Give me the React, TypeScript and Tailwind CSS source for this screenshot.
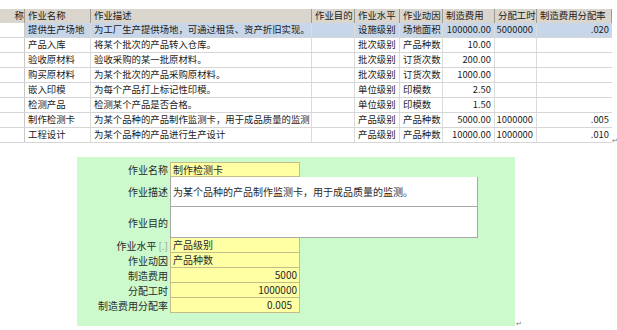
import React from "react";

const cols = [25, 66, 221, 43, 45, 43, 52, 42, 76];

const header = ["称", "作业名称", "作业描述", "作业目的", "作业水平", "作业动因", "制造费用", "分配工时", "制造费用分配率"];

const rows: string[][] = [
  ["提供生产场地", "为工厂生产提供场地，可通过租赁、资产折旧实现。", "", "设施级别", "场地面积", "100000.00", "5000000", ".020"],
  ["产品入库", "将某个批次的产品转入仓库。", "", "批次级别", "产品种数", "10.00", "", ""],
  ["验收原材料", "验收采购的某一批原材料。", "", "批次级别", "订货次数", "200.00", "", ""],
  ["购买原材料", "为某个批次的产品采购原材料。", "", "批次级别", "订货次数", "1000.00", "", ""],
  ["嵌入印模", "为每个产品打上标记性印模。", "", "单位级别", "印模数", "2.50", "", ""],
  ["检测产品", "检测某个产品是否合格。", "", "单位级别", "印模数", "1.50", "", ""],
  ["制作检测卡", "为某个品种的产品制作监测卡，用于成品质量的监测", "", "产品级别", "产品种数", "5000.00", "1000000", ".005"],
  ["工程设计", "为某个品种的产品进行生产设计", "", "产品级别", "产品种数", "10000.00", "1000000", ".010"],
];

// columns holding numbers are right aligned
const rightCols = [5, 6, 7];

const font = { fontFamily: '"Noto Sans CJK SC", "Noto Sans", sans-serif' };

// word paragraph mark
const Mark = ({ className }: { className?: string }) => (
  <span
    className={`text-[7px] leading-none text-[#777] ${className ?? ""}`}
    style={{ fontFamily: '"DejaVu Sans", sans-serif' }}
  >
    ↵
  </span>
);

const Grid = () => (
  <div className="flex items-end">
    <div className="w-[612px] text-[9.4px] leading-none text-[#1a1a1a]">
      {/* Header */}
      <div className="flex h-[14px] bg-[#dad6cd]">
        {header.map((h, i) => (
          <div
            key={i}
            style={{ width: i === 8 ? 75 : cols[i] }}
            className={`flex items-center overflow-hidden whitespace-nowrap border-r border-[#9d9a93] ${
              i === 0 ? "justify-end" : "pl-[3px]"
            }`}
          >
            {h}
          </div>
        ))}
      </div>

      {/* Body */}
      {rows.map((r, ri) => (
        <div key={ri} className="flex h-[15px] border-b border-[#d6d6d6]">
          <div style={{ width: cols[0] }} className="border-r border-[#c8c8c8]" />
          {r.map((c, ci) => (
            <div
              key={ci}
              style={{ width: ci === 7 ? 75 : cols[ci + 1] }}
              className={`flex items-center overflow-hidden whitespace-nowrap ${
                ci < r.length - 1 ? "border-r border-[#dcdcdc]" : ""
              } ${ri === 0 ? "bg-[#c8d6ea]" : "bg-white"} ${
                rightCols.includes(ci) ? "justify-end pr-[3px]" : ci === 7 ? "justify-end pr-px" : "pl-[3px]"
              }`}
            >
              {c}
            </div>
          ))}
        </div>
      ))}
    </div>
    <Mark className="-mb-[2px]" />
  </div>
);

const Yellow = ({ value, right, first, pr }: { value: string; right?: boolean; first?: boolean; pr?: string }) => (
  <div
    className={`flex h-[15px] w-[130px] items-center border-x border-b border-[#c4bd8a] bg-[#ffffa3] px-[2px] ${
      first ? "border-t" : ""
    } ${right ? "justify-end" : ""} ${pr ?? ""}`}
  >
    {value}
  </div>
);

const Label = ({ children }: { children: React.ReactNode }) => (
  <div className="flex w-[93px] shrink-0 items-center justify-end pr-[2px]">{children}</div>
);

const DetailForm = () => (
  <div className="ml-[77px] mt-[14px] flex items-end">
    <div className="h-[169px] w-[438px] bg-[#ccfacc] pt-[5px] text-[10px] leading-none text-[#2a2a2a]">
      <div className="flex">
        <Label>作业名称</Label>
        <Yellow value="制作检测卡" first />
      </div>
      <div className="flex h-[30px]">
        <Label>作业描述</Label>
        <div className="flex h-[30px] w-[308px] items-center border-x border-b border-[#a9a9a9] bg-white px-[2px]">
          为某个品种的产品制作监测卡，用于成品质量的监测。
        </div>
      </div>
      <div className="flex h-[31px]">
        <Label>作业目的</Label>
        <div className="h-[31px] w-[308px] border-x border-b border-[#a9a9a9] bg-white" />
      </div>
      <div className="flex">
        <Label>
          作业水平<span className="ml-[2px] text-[#9a9a9a]">[.]</span>
        </Label>
        <Yellow value="产品级别" />
      </div>
      <div className="flex">
        <Label>作业动因</Label>
        <Yellow value="产品种数" />
      </div>
      <div className="flex">
        <Label>制造费用</Label>
        <Yellow value="5000" right />
      </div>
      <div className="flex">
        <Label>分配工时</Label>
        <Yellow value="1000000" right />
      </div>
      <div className="flex">
        <Label>制造费用分配率</Label>
        <Yellow value="0.005" right pr="pr-[7px]" />
      </div>
    </div>
    <Mark className="ml-px -mb-[2px]" />
  </div>
);

export default function App() {
  return (
    <div className="h-[330px] w-[617px] overflow-hidden bg-white pt-[9px]" style={font}>
      <Grid />
      <DetailForm />
    </div>
  );
}
